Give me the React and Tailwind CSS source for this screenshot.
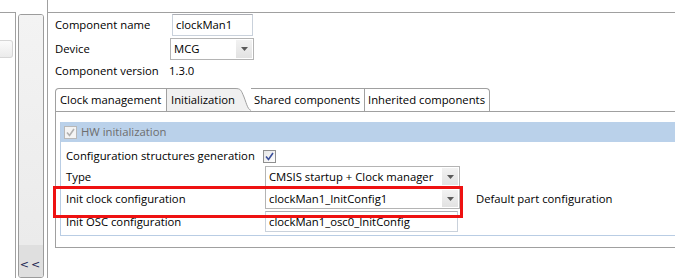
import React from 'react';

const Arrow = () => (
  <div className="w-[16px] self-stretch my-[1px] mr-[1px] bg-gradient-to-b from-[#f2f2f2] to-[#e2e2e2] flex items-center justify-center">
    <svg width="7" height="4" viewBox="0 0 7 4">
      <path d="M0 0 H7 L3.5 4 Z" fill="#5a5a5a" />
    </svg>
  </div>
);

const Select = ({ value, width, height = 'h-[21px]' }) => (
  <div className={`${width} ${height} flex items-stretch border border-[#b4b4b4] bg-white`}>
    <span className="flex-1 pl-[3px] flex items-center whitespace-nowrap overflow-hidden">{value}</span>
    <Arrow />
  </div>
);

const TextBox = ({ value, width, height = 'h-[21px]' }) => (
  <div className={`${width} ${height} flex items-center pl-[3px] border border-[#c9d1db] border-t-[#abadb3] bg-white whitespace-nowrap overflow-hidden`}>
    {value}
  </div>
);

const Check = ({ disabled }) => (
  <div className={`w-[13px] h-[13px] border flex items-center justify-center ${disabled ? 'border-[#b8b8b8] bg-[#f4f4f4]' : 'border-[#8f8f8f] bg-gradient-to-br from-[#e6e6e6] to-white'}`}>
    <svg width="9" height="9" viewBox="0 0 9 9">
      <path d="M1 4.5 L3.5 7.5 L8 1" fill="none" stroke={disabled ? '#b0b0b0' : '#3b4f9a'} strokeWidth="1.6" />
    </svg>
  </div>
);

const Row = ({ label, children, className = '' }) => (
  <div className={`flex items-center pl-[5px] ${className}`}>
    <span className="w-[199px] shrink-0 whitespace-nowrap">{label}</span>
    {children}
  </div>
);

export default function App() {
  return (
    <div className="flex w-[675px] h-[278px] bg-white overflow-hidden font-['Open_Sans',sans-serif] text-[11.3px] leading-none text-black">
      {/* left view stub */}
      <div className="w-[16px] shrink-0 pt-[12px] flex flex-col">
        <div className="flex-1 border-t border-r border-[#a0a0a0] pt-[27px]">
          <div className="h-[18px] w-[13px] rounded-r-[3px] border border-l-0 border-[#d6d6d6] bg-gradient-to-b from-[#fbfbfb] to-[#ebebeb]" />
        </div>
      </div>

      {/* minimized side strip */}
      <div className="w-[32px] shrink-0 pl-[2px] pr-[3px] pt-[14px] border-r border-[#a0a0a0] flex">
        <div className="flex-1 flex flex-col rounded-[3px] border border-[#9c9c9c] overflow-hidden">
          <div className="flex-1 bg-gradient-to-b from-[#f3f3f3] to-[#ebebeb]" />
          <div className="h-[32px] bg-[#dfdfdf] flex items-start justify-center pt-[14px] text-[11px] text-[#1c2550] tracking-[2px] font-['DejaVu_Sans',sans-serif]">
            &lt;&lt;
          </div>
        </div>
      </div>

      {/* properties view */}
      <div className="flex-1 flex flex-col mt-[12px] border-t border-[#a0a0a0] pl-[7px]">
        <div className="flex items-center h-[22px] mt-[1px]">
          <span className="w-[117px] shrink-0">Component name</span>
          <TextBox value="clockMan1" width="w-[81px]" height="h-[22px]" />
        </div>
        <div className="flex items-center h-[22px] mt-[2px]">
          <span className="w-[115px] shrink-0">Device</span>
          <Select value="MCG" width="w-[84px]" height="h-[22px]" />
        </div>
        <div className="flex items-center h-[18px] mt-[2px]">
          <span className="w-[114px] shrink-0">Component version</span>
          <span>1.3.0</span>
        </div>

        {/* tabs */}
        <div className="flex items-end h-[23px] mt-[8px]">
          <div className="w-[112px] h-[23px] flex items-center pl-[4px] border-l border-t border-r border-[#a0a0a0] rounded-tl-[4px] bg-white whitespace-nowrap">
            Clock management
          </div>
          <div className="flex h-[23px] items-stretch">
            <div className="w-[68px] flex items-center pl-[4px] bg-[#f0f0f0] border-t border-[#a0a0a0] whitespace-nowrap">
              Initialization
            </div>
            <svg width="17" height="23" viewBox="0 0 17 23" className="block">
              <path d="M0 0.5 C6 0.5 6 2 9 9 C12 17 13 22.5 17 22.5 L0 23 Z" fill="#f0f0f0" />
              <path d="M0 0.5 C6 0.5 6 2 9 9 C12 17 13 22.5 17 22.5" fill="none" stroke="#a0a0a0" />
            </svg>
          </div>
          <div className="w-[114px] h-[23px] flex items-center pl-[3px] border-t border-r border-[#a0a0a0] bg-white whitespace-nowrap -ml-[1px]">
            Shared components
          </div>
          <div className="w-[125px] h-[23px] flex items-center pl-[3px] border-t border-r border-[#a0a0a0] rounded-tr-[4px] bg-white whitespace-nowrap">
            Inherited components
          </div>
          <div className="flex-1" />
        </div>

        {/* tab page */}
        <div className="relative h-[137px] border-l border-t border-b border-[#a0a0a0] pl-[4px] pt-[10px]">
          <div className="border-l border-b border-[#b9cde4] h-[114px]">
            <div className="h-[20px] bg-[#bad1ea] flex items-center gap-[4px] pl-[3px] text-[#6d6d6d]">
              <Check disabled />
              <span>HW initialization</span>
            </div>
            <Row label="Configuration structures generation" className="h-[18px] mt-[5px]">
              <div className="-ml-[2px]"><Check /></div>
            </Row>
            <Row label="Type" className="h-[21px] mt-[1px]">
              <Select value="CMSIS startup + Clock manager" width="w-[195px]" />
            </Row>
            <Row label="Init clock configuration" className="relative h-[21px] mt-[1px]">
              <Select value="clockMan1_InitConfig1" width="w-[195px]" />
              <span className="ml-[16px] whitespace-nowrap">Default part configuration</span>
              <div className="absolute left-[-8px] top-[-2px] w-[410px] h-[32px] border-[3px] border-[#ee1111] z-10 pointer-events-none" />
            </Row>
            <Row label="Init OSC configuration" className="h-[21px] mt-[2px]">
              <TextBox value="clockMan1_osc0_InitConfig" width="w-[193px]" />
            </Row>
          </div>
        </div>
      </div>
    </div>
  );
}
